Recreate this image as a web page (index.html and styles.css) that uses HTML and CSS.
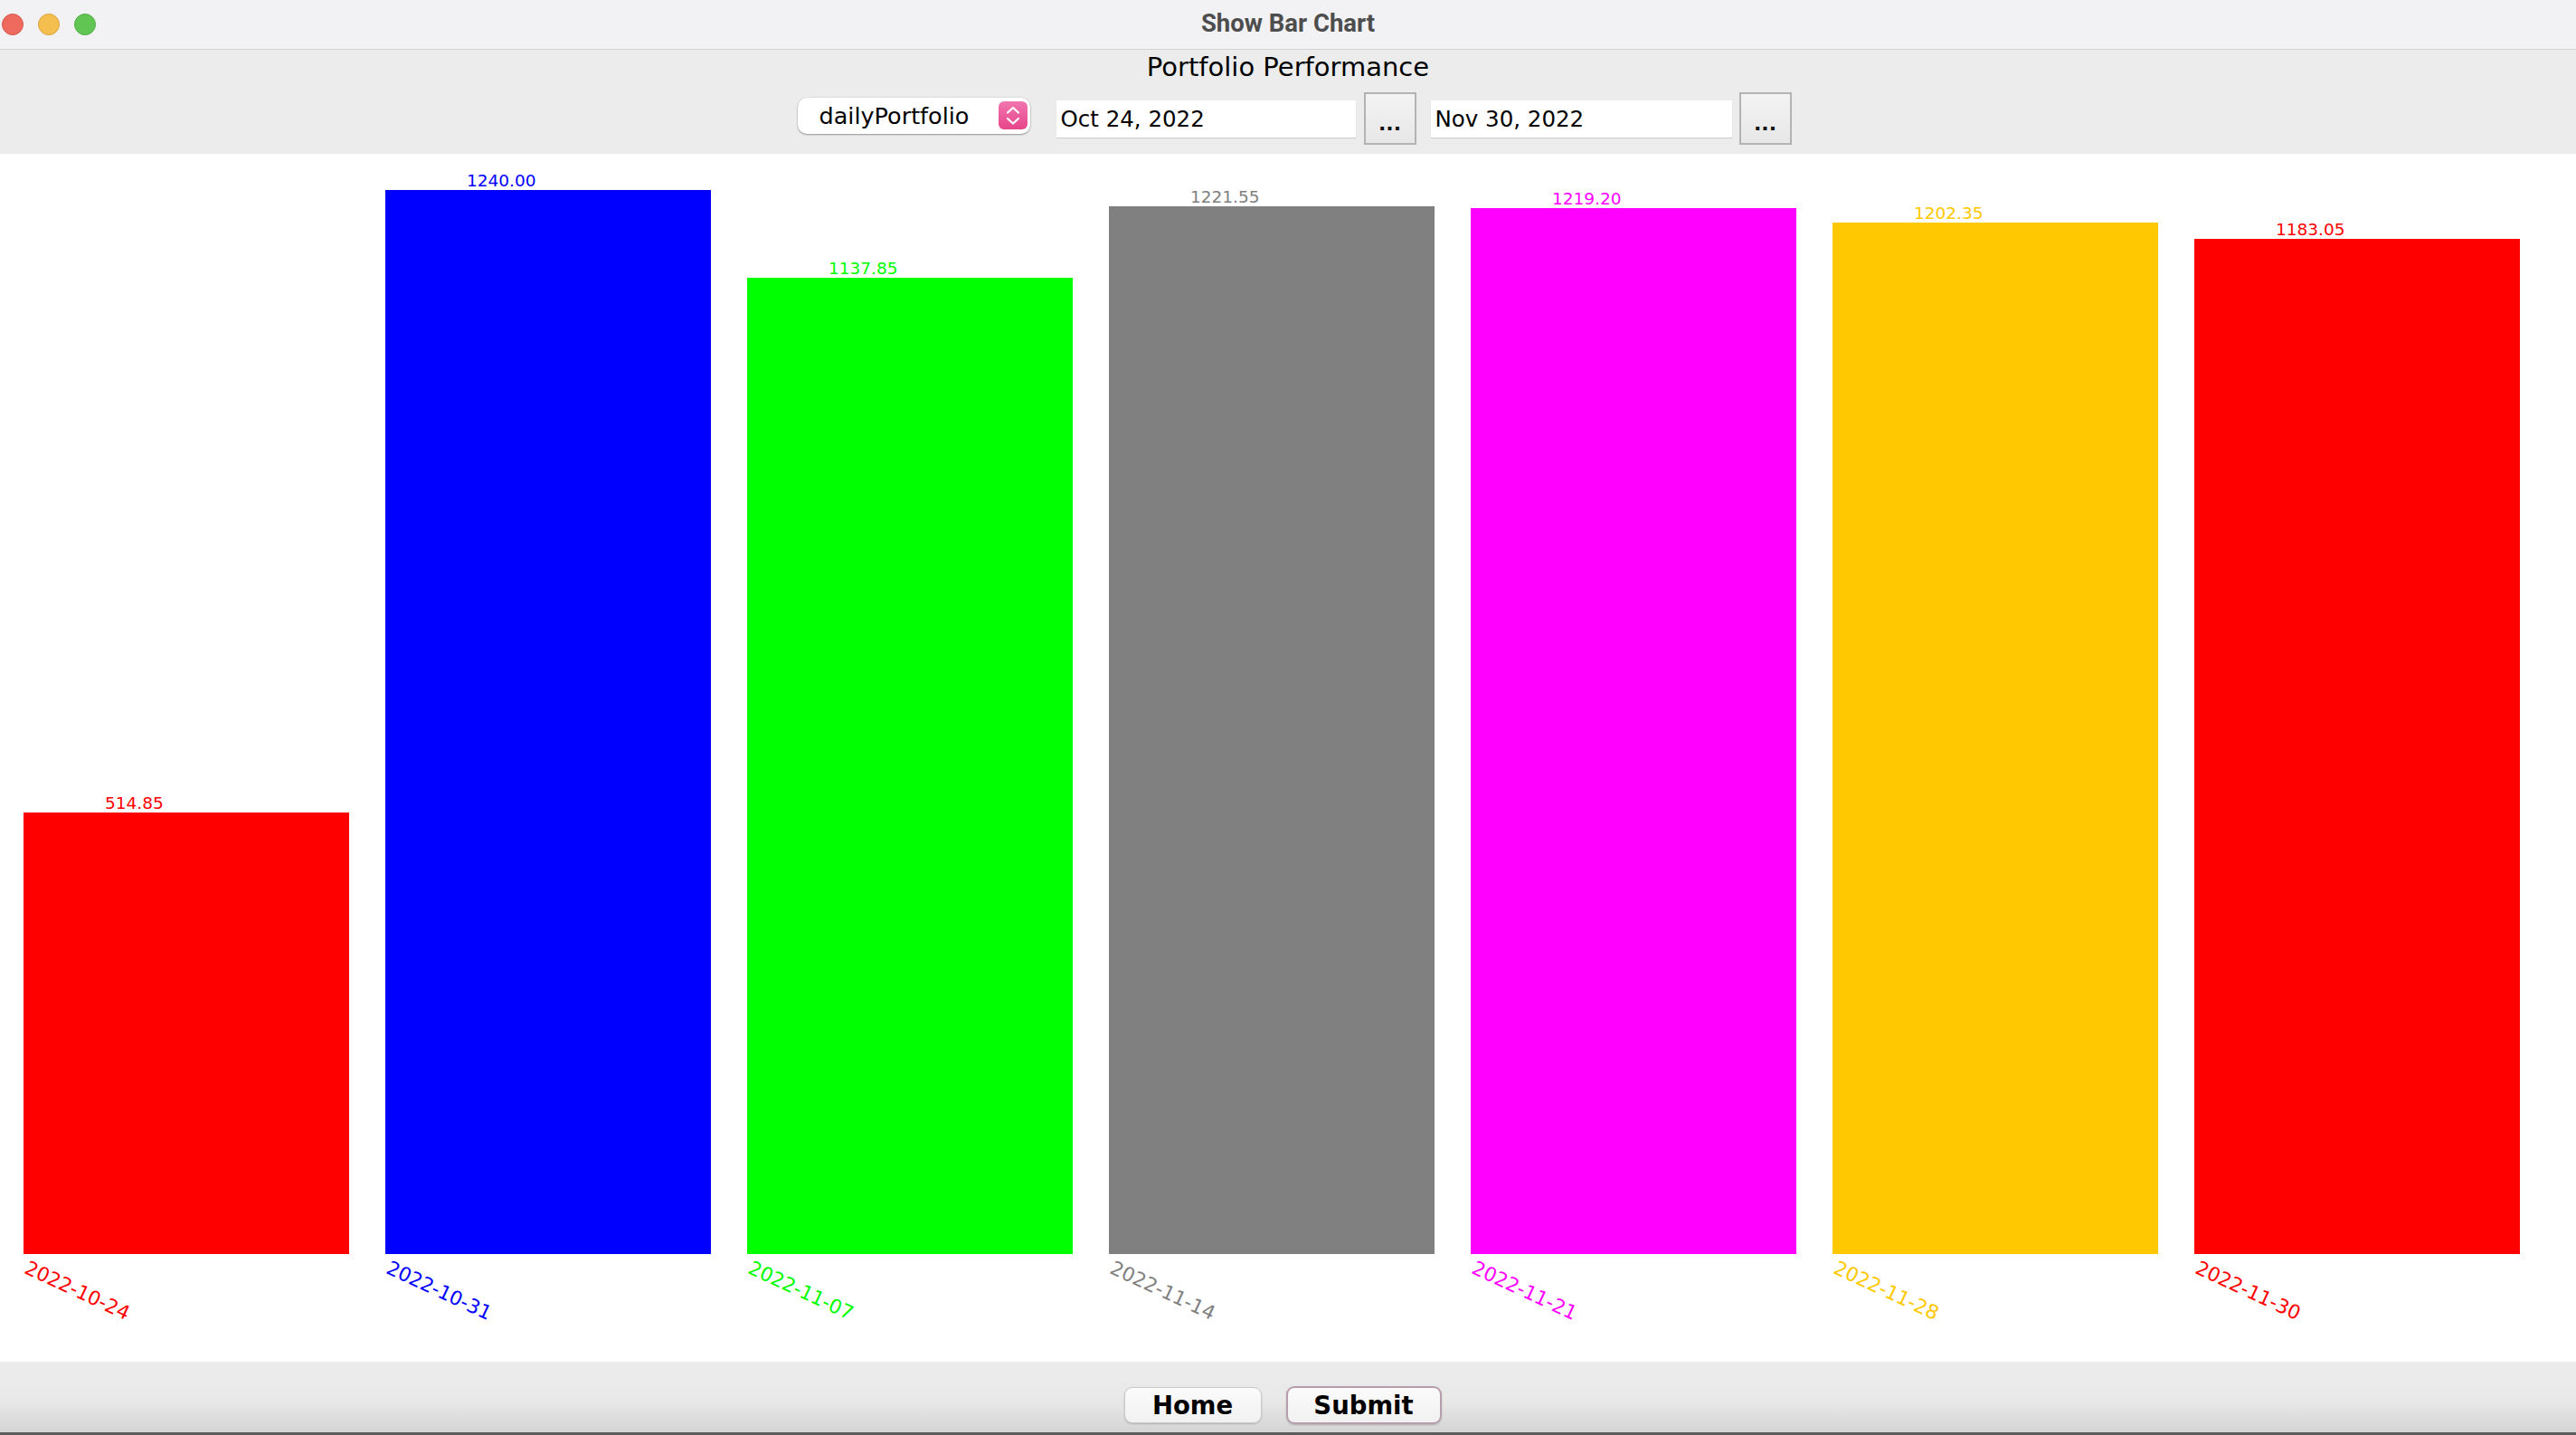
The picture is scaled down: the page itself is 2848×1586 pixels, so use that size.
FILE: index.html
```html
<!DOCTYPE html>
<html>
<head>
<meta charset="utf-8">
<title>Show Bar Chart</title>
<link rel="stylesheet" href="styles.css">
</head>
<body>
<div class="window">
  <div class="titlebar">
    <div class="lights">
      <span class="light l-red"></span>
      <span class="light l-yellow"></span>
      <span class="light l-green"></span>
    </div>
    <div class="wtitle">Show Bar Chart</div>
    <div></div>
  </div>
  <div class="header">
    <div class="ptitle">Portfolio Performance</div>
    <div class="controls">
      <div class="combo">
        <span class="combo-text">dailyPortfolio</span>
        <span class="stepper">
          <svg width="32" height="31" viewBox="0 0 32 31">
            <path d="M10 12.5 L16 7 L22 12.5" fill="none" stroke="#fff" stroke-width="2.2" stroke-linecap="round" stroke-linejoin="round"/>
            <path d="M10 19 L16 24.5 L22 19" fill="none" stroke="#fff" stroke-width="2.2" stroke-linecap="round" stroke-linejoin="round"/>
          </svg>
        </span>
      </div>
      <div class="field">Oct 24, 2022</div>
      <div class="more">...</div>
      <div class="field field-2">Nov 30, 2022</div>
      <div class="more">...</div>
    </div>
  </div>
  <div class="chart">
    <div class="plot">
      <div class="col c-red"><div class="val">514.85</div><div class="bar" style="height:488px"></div></div>
      <div class="col c-blue"><div class="val">1240.00</div><div class="bar" style="height:1176px"></div></div>
      <div class="col c-green"><div class="val">1137.85</div><div class="bar" style="height:1079px"></div></div>
      <div class="col c-gray"><div class="val">1221.55</div><div class="bar" style="height:1158px"></div></div>
      <div class="col c-magenta"><div class="val">1219.20</div><div class="bar" style="height:1156px"></div></div>
      <div class="col c-orange"><div class="val">1202.35</div><div class="bar" style="height:1140px"></div></div>
      <div class="col c-red"><div class="val">1183.05</div><div class="bar" style="height:1122px"></div></div>
    </div>
    <div class="dates">
      <div class="date c-red"><span class="dlabel">2022-10-24</span></div>
      <div class="date c-blue"><span class="dlabel">2022-10-31</span></div>
      <div class="date c-green"><span class="dlabel">2022-11-07</span></div>
      <div class="date c-gray"><span class="dlabel">2022-11-14</span></div>
      <div class="date c-magenta"><span class="dlabel">2022-11-21</span></div>
      <div class="date c-orange"><span class="dlabel">2022-11-28</span></div>
      <div class="date c-red"><span class="dlabel">2022-11-30</span></div>
    </div>
  </div>
  <div class="footer">
    <button class="btn">Home</button>
    <button class="btn btn-submit">Submit</button>
  </div>
</div>
</body>
</html>
```
FILE: styles.css
```css
html, body {
  margin: 0;
  padding: 0;
}
body {
  width: 2848px;
  height: 1586px;
  overflow: hidden;
  font-family: "DejaVu Sans", "Open Sans", sans-serif;
  background: #ececec;
}
.window {
  display: flex;
  flex-direction: column;
  height: 1586px;
}

/* title bar */
.titlebar {
  height: 54px;
  border-bottom: 1px solid #d3d3d5;
  background: #f2f2f4;
  display: grid;
  grid-template-columns: 1fr auto 1fr;
  align-items: center;
}
.lights {
  display: flex;
  gap: 16px;
  padding-left: 2px;
}
.light {
  width: 22px;
  height: 22px;
  border-radius: 50%;
  border: 1px solid transparent;
}
.l-red { background: #ee6a5f; border-color: #d5564b; }
.l-yellow { background: #f5bf4f; border-color: #d9a33b; }
.l-green { background: #61c554; border-color: #4fad43; }
.wtitle {
  font-family: Roboto, "Liberation Sans", sans-serif;
  font-weight: 700;
  font-size: 27.5px;
  color: #4d4d4d;
  line-height: 54px;
  margin-top: -3px;
}

/* header panel */
.header {
  background: #ececec;
  height: 115px;
  box-sizing: border-box;
  padding-top: 2px;
}
.ptitle {
  text-align: center;
  font-size: 29px;
  line-height: 34px;
  height: 34px;
  color: #000;
}
.controls {
  margin-top: 11px;
  height: 58px;
  display: flex;
  align-items: center;
  justify-content: center;
  padding-left: 14px;
}
.combo {
  width: 257px;
  height: 40px;
  box-sizing: border-box;
  background: #fff;
  border-radius: 10px;
  box-shadow: 0 1px 2px rgba(0,0,0,0.35), 0 0 0 0.5px rgba(0,0,0,0.08);
  display: flex;
  align-items: center;
  justify-content: space-between;
  padding-left: 24px;
  padding-right: 3px;
  margin-bottom: 7px;
  margin-right: 29px;
}
.combo-text {
  font-size: 25.5px;
  color: #000;
}
.stepper {
  width: 32px;
  height: 31px;
  border-radius: 6px;
  background: linear-gradient(#f175b0, #e6468a);
  display: flex;
}
.field {
  width: 331px;
  height: 41px;
  box-sizing: border-box;
  background: #fff;
  box-shadow: 0 1px 1px rgba(0,0,0,0.12);
  font-size: 24.5px;
  line-height: 41px;
  padding-left: 5px;
  color: #000;
  margin-right: 9px;
}
.field-2 {
  width: 333px;
  margin-right: 8px;
}
.more {
  width: 58px;
  height: 58px;
  box-sizing: border-box;
  border: 2px solid #b3b3b3;
  background: linear-gradient(#f3f3f3, #e7e7e7);
  font-weight: 700;
  font-size: 22px;
  line-height: 58px;
  padding-top: 4px;
  text-align: center;
  color: #111;
  margin-right: 16px;
}
.more:last-child {
  margin-right: 0;
}

/* chart */
.chart {
  background: #fff;
  height: 1335px;
  box-sizing: border-box;
  padding-left: 26px;
}
.plot {
  height: 1216px;
  display: flex;
  align-items: flex-end;
  gap: 40px;
}
.col {
  width: 360px;
  display: flex;
  flex-direction: column;
}
.val {
  font-size: 18.5px;
  line-height: 18px;
  margin-left: 90px;
  margin-bottom: 1px;
}
.bar {
  background: currentColor;
}
.dates {
  display: flex;
  gap: 40px;
}
.date {
  width: 360px;
  height: 110px;
}
.dlabel {
  display: inline-block;
  font-size: 21.5px;
  line-height: 20px;
  transform-origin: 0 0;
  transform: rotate(25deg);
  margin-left: 7px;
  margin-top: 5px;
}
.c-red { color: #ff0000; }
.c-blue { color: #0000ff; }
.c-green { color: #00ff00; }
.c-gray { color: #808080; }
.c-magenta { color: #ff00ff; }
.c-orange { color: #ffc800; }

/* footer */
.footer {
  flex: 1;
  background: linear-gradient(#ececec, #e8e8e8 55%, #d6d6d6 96%);
  border-bottom: 3px solid #5c5c5c;
  display: flex;
  justify-content: center;
  align-items: flex-start;
  gap: 27px;
  padding-top: 28px;
  padding-right: 12px;
  box-sizing: border-box;
}
.btn {
  font-family: "DejaVu Sans", sans-serif;
  font-weight: 700;
  font-size: 27.5px;
  color: #000;
  height: 40px;
  width: 152px;
  padding: 0;
  border: 1px solid #c9c9c9;
  border-radius: 9px;
  background: linear-gradient(#fbfbfb, #f1f1f1);
  box-shadow: 0 1px 2px rgba(0,0,0,0.2);
  line-height: 36px;
}
.btn-submit {
  width: 172px;
  height: 42px;
  border: 2px solid #b79dac;
  margin-top: -1px;
}
```
